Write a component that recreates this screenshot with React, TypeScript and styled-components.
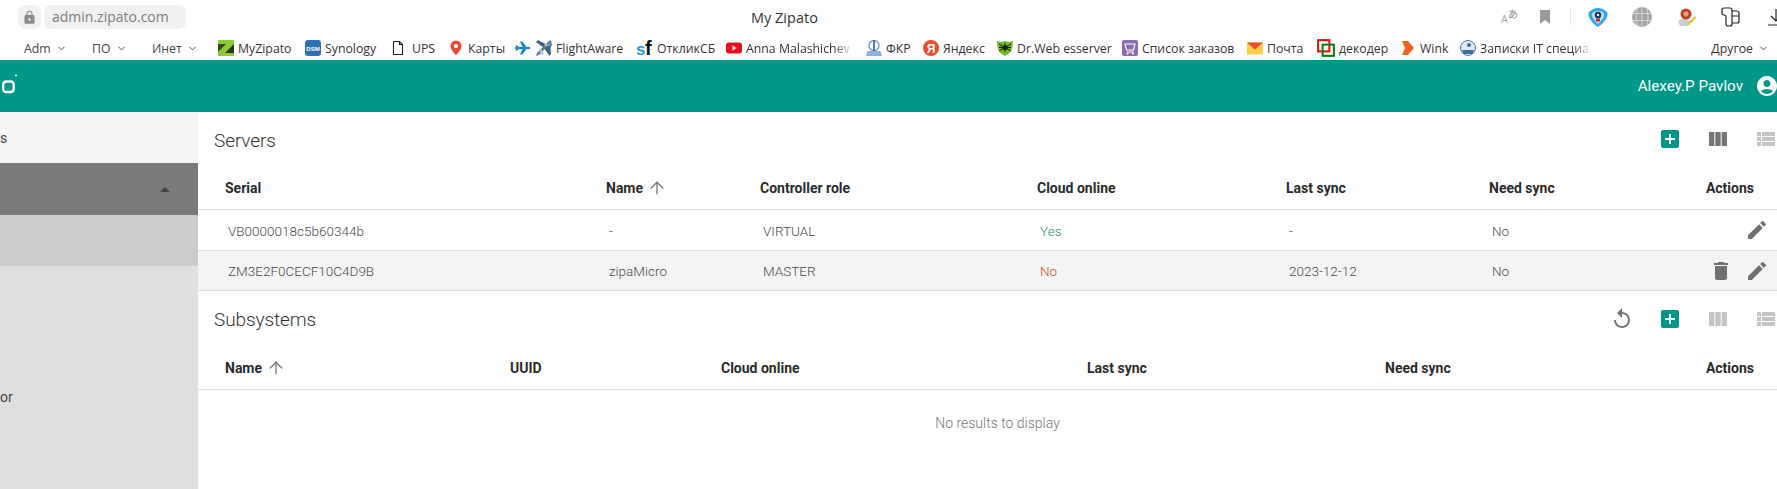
import React from "react";
import styled, { createGlobalStyle } from "styled-components";
import { ArrowUp, ChevronDown } from "lucide-react";
import { MdAccountCircle, MdAddBox, MdDelete, MdEdit, MdLock, MdReplay, MdViewColumn, MdViewList } from "react-icons/md";

const Global = createGlobalStyle`
  html, body { margin: 0; padding: 0; width: 1777px; height: 489px; overflow: hidden; background: #fff; }
  * { box-sizing: border-box; }
`;

const Page = styled.div`
  width: 1777px; height: 489px; overflow: hidden; display: flex; flex-direction: column;
  font-family: Roboto, "Liberation Sans", sans-serif;
`;

/* Browser chrome */
const TopBar = styled.div`
  height: 34px; display: grid; grid-template-columns: 751px 1fr auto; align-items: center;
  font-family: "Open Sans", "Noto Sans", sans-serif;
`;
const AddressGroup = styled.div`display: flex; gap: 3px; padding-left: 18px; align-items: center;`;
const LockPill = styled.div`
  width: 23px; height: 24px; border-radius: 7px; background: #f1f1f1; color: #8a8a8a;
  display: flex; align-items: center; justify-content: center;
`;
const UrlPill = styled.div`
  width: 142px; height: 24px; border-radius: 7px; background: #f1f1f1; color: #7c7c7c;
  font-size: 14px; line-height: 24px; padding-left: 8px; white-space: nowrap;
`;
const PageTitle = styled.div`font-size: 14.5px; color: #333;`;
const ToolIcons = styled.div`
  display: grid; grid-template-columns: 36px 34px 16px 40px 48px 42px 44px 48px; margin-right: -23px;
  align-items: center; justify-items: center;
`;
const Sep = styled.div`width: 1px; height: 16px; background: #e4e4e4;`;

const BookmarkBar = styled.div`
  height: 26px; display: flex; align-items: center; padding-left: 24px; padding-top: 2px;
  font-family: "Open Sans", "Noto Sans", sans-serif; font-size: 12.3px; color: #333;
`;
const Bookmark = styled.div<{ $w: number }>`
  width: ${(p) => p.$w}px; flex: none; display: flex; align-items: center; gap: 4px; white-space: nowrap;
`;
const Fade = styled.span`
  display: block; flex: none;
  -webkit-mask-image: linear-gradient(to right, #000 85%, rgba(0, 0, 0, 0.15));
  mask-image: linear-gradient(to right, #000 85%, rgba(0, 0, 0, 0.15));
`;
const Folder = styled.div`display: flex; align-items: center; gap: 5px; color: #444;`;
const Other = styled.div`margin-left: auto; padding-right: 8px; display: flex; align-items: center; gap: 5px;`;

/* App */
const AppBar = styled.header`
  height: 52px; background: #009688; color: #fff; display: flex; align-items: center; justify-content: space-between;
  padding-left: 2px; flex: none;
`;
const UserBlock = styled.div`display: flex; align-items: center; gap: 12px; font-size: 15.2px; margin-right: -2px;`;
const Main = styled.div`display: flex; flex: 1; min-height: 0;`;
const Sidebar = styled.nav`width: 198px; flex: none; display: flex; flex-direction: column; background: #dfdfdf; color: #444; font-size: 14px;`;
const SideItem = styled.div<{ $h: number; $bg: string }>`
  height: ${(p) => p.$h}px; background: ${(p) => p.$bg}; display: flex; align-items: center; justify-content: space-between;
  padding-right: 28px; flex: none;
`;
const SideRest = styled.div`padding-top: 122px; line-height: 18px;`;
const Caret = styled.span`
  width: 0; height: 0; border-left: 5px solid transparent; border-right: 5px solid transparent; border-bottom: 5px solid #444;
`;
const Content = styled.main`flex: 1; min-width: 0; background: #fff;`;
const SectionHead = styled.div<{ $h: number }>`
  height: ${(p) => p.$h}px; display: flex; align-items: center; justify-content: space-between; padding-left: 16px; padding-top: 3px;
`;
const SectionTitle = styled.h2<{ $top: number }>`
  margin: 0; font-size: 19px; font-weight: 300; color: #333; padding-top: ${(p) => p.$top}px; letter-spacing: -0.1px;
`;
const Tools = styled.div`display: flex; margin-right: -13px;`;
const Tool = styled.span<{ $c?: string }>`
  width: 48px; height: 24px; display: flex; align-items: center; justify-content: center; color: ${(p) => p.$c || "#757575"};
`;
const Row = styled.div<{ $cols: string; $shade?: boolean; $h?: number }>`
  display: grid; grid-template-columns: ${(p) => p.$cols}; padding: 0 8px 0 27px; align-items: center;
  border-bottom: 1px solid #dedede; background: ${(p) => (p.$shade ? "#f4f4f4" : "#fff")};
  height: ${(p) => p.$h || 41}px;
`;
const HeadRow = styled(Row)`padding-top: 3px;`;
const HeadCell = styled.div<{ $end?: boolean }>`
  font-size: 14px; font-weight: 700; color: #2a2a2a; display: flex; align-items: center; gap: 4px; height: 20px;
  justify-content: ${(p) => (p.$end ? "flex-end" : "flex-start")}; padding-right: ${(p) => (p.$end ? "15px" : "0")};
`;
const Cell = styled.div<{ $c?: string }>`font-size: 13.5px; font-weight: 300; color: ${(p) => p.$c || "#4a4a4a"}; padding: 1px 0 0 3px;`;
const Actions = styled.div`display: flex; justify-content: flex-end; gap: 12px; color: #707070;`;
const Empty = styled.div`height: 65px; display: flex; align-items: center; justify-content: center; padding-left: 20px; font-size: 14px; font-weight: 300; color: #777;`;

/* Drawings */
const Svg = ({ children, s = 16 }: { children: React.ReactNode; s?: number }) => (
  <svg width={s} height={s} viewBox="0 0 16 16" style={{ flex: "none", display: "block" }}>{children}</svg>
);
const Fav = {
  zip: <Svg><rect width="16" height="16" fill="#8ccb34" /><path d="M0 4h8L0 12z" fill="#34491f" /><path d="M16 4v9H7z" fill="#26381a" /></Svg>,
  dsm: <Svg><rect width="16" height="16" rx="3" fill="#2f6fb3" /><text x="8" y="10.500" fontSize="6" fontWeight="700" fill="#fff" textAnchor="middle" fontFamily="Liberation Sans">DSM</text></Svg>,
  doc: <Svg><path d="M1.500 1.500h6l3 3v10h-9z M7.500 1.500v3h3" fill="#fff" stroke="#222" strokeWidth="1.100" /></Svg>,
  pin: <Svg><path d="M8 15.500C5 11.500 2.500 9 2.500 6a5.500 5.500 0 0 1 11 0C13.500 9 11 11.500 8 15.500z" fill="#ea4a35" /><circle cx="8" cy="6" r="2.100" fill="#fff" /></Svg>,
  plane: <Svg><path d="M0 8L1.500 5L4 7h3.500L5 1.500h2.500L11.500 7h3Q16.500 8 14.500 9h-3L7.500 14.500H5L7.500 9H4L1.500 11z" fill="#1d86c9" /></Svg>,
  fa: <Svg><path d="M0 2l2-2 11 6 2-3 1 1-1.500 4 0 0L15 14l-1.500 2L8 8z" fill="#3d6184" /><path d="M14 0l2 2-13 13-3 1 1-3z" fill="#5a7d9e" /><path d="M3 8l3 2 2 4-3 1zM8 3l3 1 1 2-3 0z" fill="#b7c6d4" /></Svg>,
  yt: <Svg><rect y="2.500" width="16" height="11" rx="3" fill="#e8101c" /><path d="M6.500 5.500v5l4-2.500z" fill="#fff" /></Svg>,
  fkr: <Svg><circle cx="8" cy="5.500" r="5" fill="none" stroke="#6f9acb" strokeWidth="1.300" /><path d="M8 0v11" stroke="#3f6da8" strokeWidth="1.800" /><path d="M0 16l1.500-5h13l1.500 5z" fill="#8db4de" /></Svg>,
  ya: <Svg><circle cx="8" cy="8" r="8" fill="#ea4a2a" /><text x="8" y="12.500" fontSize="12" fontWeight="700" fill="#fff" textAnchor="middle" fontFamily="Liberation Sans">Я</text></Svg>,
  drweb: <Svg><path d="M0 1l4 1 4-1 4 1 4-1c0 8-2 12-8 15C2 13 0 9 0 1z" fill="#77b82e" /><circle cx="8" cy="7.500" r="2.600" fill="#13210a" /><path d="M2 4l12 7M14 4L2 11M8 3v9M2 7.500h12" stroke="#13210a" strokeWidth="1" /></Svg>,
  cart: <Svg><rect width="16" height="16" rx="2" fill="#8a6bb0" /><path d="M3 4h10l-1.500 6h-7zM5 12h7" stroke="#fff" strokeWidth="1.100" fill="none" /><circle cx="5.500" cy="13.500" r="1" fill="#fff" /><circle cx="11" cy="13.500" r="1" fill="#fff" /></Svg>,
  mail: <Svg><rect y="2.500" width="16" height="12" fill="#fbcf4a" /><path d="M0 2.500h16L8 9.500z" fill="#ee4b32" /></Svg>,
  dec: <Svg s={18}><rect x="1" y="1" width="10" height="10" fill="none" stroke="#dd1111" strokeWidth="1.800" /><rect x="5" y="5" width="10" height="10" fill="none" stroke="#117711" strokeWidth="1.800" /></Svg>,
  wink: <Svg><path d="M2 1h6l6 7-6 7H2l3-7z" fill="#f4611d" /></Svg>,
  notes: <Svg><circle cx="8" cy="8" r="7.500" fill="#dfe9f3" stroke="#4d7aa8" /><path d="M2 10h12l-1.500 4h-9z" fill="#3e6d9c" /><circle cx="9" cy="5" r="2" fill="#3e6d9c" /></Svg>,
};
const SfMark = () => (
  <svg width="17" height="22" viewBox="0 0 17 22" style={{ flex: "none", display: "block" }}>
    <text x="0" y="18" fontSize="17" fontWeight="700" fill="#1a9ad6" fontFamily="Liberation Sans">s</text>
    <text x="9" y="18" fontSize="20" fontWeight="700" fill="#111" fontFamily="Liberation Sans">f</text>
  </svg>
);

const Translate = () => (
  <svg width="20" height="22" viewBox="0 0 20 22" style={{ marginLeft: "2px" }}>
    <text x="0" y="17" fontSize="10" fill="#a8a8a8" fontFamily="Liberation Sans">A</text>
    <text x="7" y="12" fontSize="10" fill="#8c8c8c" fontFamily="Noto Sans CJK SC">あ</text>
  </svg>
);
const BookmarkGlyph = () => (
  <svg width="10" height="14" viewBox="0 0 10 14"><path d="M0 0h10v14L5 10l-5 4z" fill="#9a9a9a" /></svg>
);
const Shield = () => (
  <svg width="20" height="19" viewBox="0 0 20 19">
    <path d="M10 0c3 0 5 1 8 3 1 1 2 2 1.500 4C19 11 14 17 10 19 6 17 1 11 .500 7 0 5 1 4 2 3c3-2 5-3 8-3z" fill="#37a6e0" />
    <path d="M10 3c3 0 6 1 6 4 0 3-3 6-6 9-3-3-6-6-6-9 0-3 3-4 6-4z" fill="#b9e3f7" />
    <circle cx="10" cy="7" r="3.200" fill="#0f2f4a" /><circle cx="10" cy="7" r="1.200" fill="#fff" /><rect x="8" y="10.500" width="4" height="3" fill="#d8222a" />
  </svg>
);
const Globe = () => (
  <svg width="20" height="20" viewBox="0 0 20 20">
    <circle cx="10" cy="10" r="10" fill="#a5a5a5" />
    <path d="M0 6.500h20M0 13.500h20M10 0v20M5.500 1c-2 6-2 12 0 18M14.500 1c2 6 2 12 0 18" stroke="#e2e2e2" strokeWidth="0.800" fill="none" />
  </svg>
);
const Ext = () => (
  <svg width="20" height="20" viewBox="0 0 20 20">
    <path d="M1 14l6-3 6 3-3 5H3z" fill="#c8ccd8" />
    <circle cx="9" cy="7" r="5.500" fill="#b8452c" /><circle cx="9" cy="7" r="2.500" fill="#e8a077" />
    <path d="M18 9l1.500 1.500L12 18l-2.500 1 1-2.500z" fill="#e6c22e" />
  </svg>
);
const KeyIcon = () => (
  <svg width="19" height="20" viewBox="0 0 19 20" fill="none" stroke="#222" strokeWidth="1.200">
    <path d="M1 3q0-2 2-2h6q2 0 2 2v14q0 2-2 2H7q-2 0-2-2V9L1 7z" /><path d="M11 4h5q2 0 2 2v8q0 2-2 2h-5M11 9h7" />
  </svg>
);
const Download = () => (
  <svg width="18" height="18" viewBox="0 0 18 18" fill="none" stroke="#222" strokeWidth="1.200">
    <path d="M9 1v12M4 8l5 5 5-5M1 17h16" />
  </svg>
);
const Logo = () => (
  <svg width="18" height="24" viewBox="0 0 18 24" fill="none" style={{ display: "block" }}>
    <rect x="1.200" y="7.500" width="10.500" height="10.500" rx="3" stroke="#fff" strokeWidth="2.400" />
    <circle cx="14" cy="1.500" r="1" fill="#fff" />
  </svg>
);

const bookmarks: { w: number; icon: React.ReactNode; text: string; fade?: boolean }[] = [
  { w: 87, icon: Fav.zip, text: "MyZipato" },
  { w: 87, icon: Fav.dsm, text: "Synology" },
  { w: 56, icon: Fav.doc, text: "UPS" },
  { w: 67, icon: Fav.pin, text: "Карты" },
  { w: 21, icon: Fav.plane, text: "" },
  { w: 100, icon: Fav.fa, text: "FlightAware" },
  { w: 90, icon: <SfMark />, text: "ОткликСБ" },
  { w: 140, icon: Fav.yt, text: "Anna Malashichev", fade: true },
  { w: 57, icon: Fav.fkr, text: "ФКР" },
  { w: 74, icon: Fav.ya, text: "Яндекс" },
  { w: 125, icon: Fav.drweb, text: "Dr.Web esserver" },
  { w: 125, icon: Fav.cart, text: "Список заказов" },
  { w: 70, icon: Fav.mail, text: "Почта" },
  { w: 83, icon: Fav.dec, text: "декодер" },
  { w: 60, icon: Fav.wink, text: "Wink" },
  { w: 130, icon: Fav.notes, text: "Записки IT специа", fade: true },
];

const serverCols = "381px 154px 277px 249px 203px 180px 1fr";
const subCols = "285px 211px 366px 298px 200px 1fr";
const sortArrow = <ArrowUp size={20} strokeWidth={1.6} color="#777" />;

export default function App() {
  return (
    <Page>
      <Global />
      <TopBar>
        <AddressGroup>
          <LockPill><MdLock size={15} /></LockPill>
          <UrlPill>admin.zipato.com</UrlPill>
        </AddressGroup>
        <PageTitle>My Zipato</PageTitle>
        <ToolIcons>
          <Translate /><BookmarkGlyph /><Sep /><Shield /><Globe /><Ext /><KeyIcon /><Download />
        </ToolIcons>
      </TopBar>
      <BookmarkBar>
        <Bookmark $w={68}><Folder>Adm <ChevronDown size={11} /></Folder></Bookmark>
        <Bookmark $w={60}><Folder>ПО <ChevronDown size={11} /></Folder></Bookmark>
        <Bookmark $w={66}><Folder>Инет <ChevronDown size={11} /></Folder></Bookmark>
        {bookmarks.map((b) => (
          <Bookmark key={b.text || "plane"} $w={b.w}>
            {b.icon}
            {b.fade ? <Fade>{b.text}</Fade> : b.text ? <span>{b.text}</span> : null}
          </Bookmark>
        ))}
        <Other>Другое <ChevronDown size={11} /></Other>
      </BookmarkBar>
      <AppBar>
        <Logo />
        <UserBlock>Alexey.P Pavlov <MdAccountCircle size={24} /></UserBlock>
      </AppBar>
      <Main>
        <Sidebar>
          <SideItem $h={51} $bg="#f4f4f4">s</SideItem>
          <SideItem $h={52} $bg="#7a7a7a"><span /><Caret /></SideItem>
          <SideItem $h={51} $bg="#cccccc" />
          <SideRest>or</SideRest>
        </Sidebar>
        <Content>
          <SectionHead $h={51}>
            <SectionTitle $top={3}>Servers</SectionTitle>
            <Tools>
              <Tool $c="#009688"><MdAddBox size={24} /></Tool>
              <Tool><MdViewColumn size={24} /></Tool>
              <Tool $c="#c4c4c4"><MdViewList size={24} /></Tool>
            </Tools>
          </SectionHead>
          <HeadRow $cols={serverCols} $h={47}>
            <HeadCell>Serial</HeadCell>
            <HeadCell>Name {sortArrow}</HeadCell>
            <HeadCell>Controller role</HeadCell>
            <HeadCell>Cloud online</HeadCell>
            <HeadCell>Last sync</HeadCell>
            <HeadCell>Need sync</HeadCell>
            <HeadCell $end>Actions</HeadCell>
          </HeadRow>
          <Row $cols={serverCols}>
            <Cell>VB0000018c5b60344b</Cell>
            <Cell>-</Cell>
            <Cell>VIRTUAL</Cell>
            <Cell $c="#2e8b7f">Yes</Cell>
            <Cell>-</Cell>
            <Cell>No</Cell>
            <Actions><MdEdit size={24} /></Actions>
          </Row>
          <Row $cols={serverCols} $shade $h={40}>
            <Cell>ZM3E2F0CECF10C4D9B</Cell>
            <Cell>zipaMicro</Cell>
            <Cell>MASTER</Cell>
            <Cell $c="#d4492a">No</Cell>
            <Cell>2023-12-12</Cell>
            <Cell>No</Cell>
            <Actions><MdDelete size={24} /><MdEdit size={24} /></Actions>
          </Row>
          <SectionHead $h={52}>
            <SectionTitle $top={1}>Subsystems</SectionTitle>
            <Tools>
              <Tool><MdReplay size={24} /></Tool>
              <Tool $c="#009688"><MdAddBox size={24} /></Tool>
              <Tool $c="#c4c4c4"><MdViewColumn size={24} /></Tool>
              <Tool $c="#c4c4c4"><MdViewList size={24} /></Tool>
            </Tools>
          </SectionHead>
          <HeadRow $cols={subCols} $h={47}>
            <HeadCell>Name {sortArrow}</HeadCell>
            <HeadCell>UUID</HeadCell>
            <HeadCell>Cloud online</HeadCell>
            <HeadCell>Last sync</HeadCell>
            <HeadCell>Need sync</HeadCell>
            <HeadCell $end>Actions</HeadCell>
          </HeadRow>
          <Empty>No results to display</Empty>
        </Content>
      </Main>
    </Page>
  );
}
